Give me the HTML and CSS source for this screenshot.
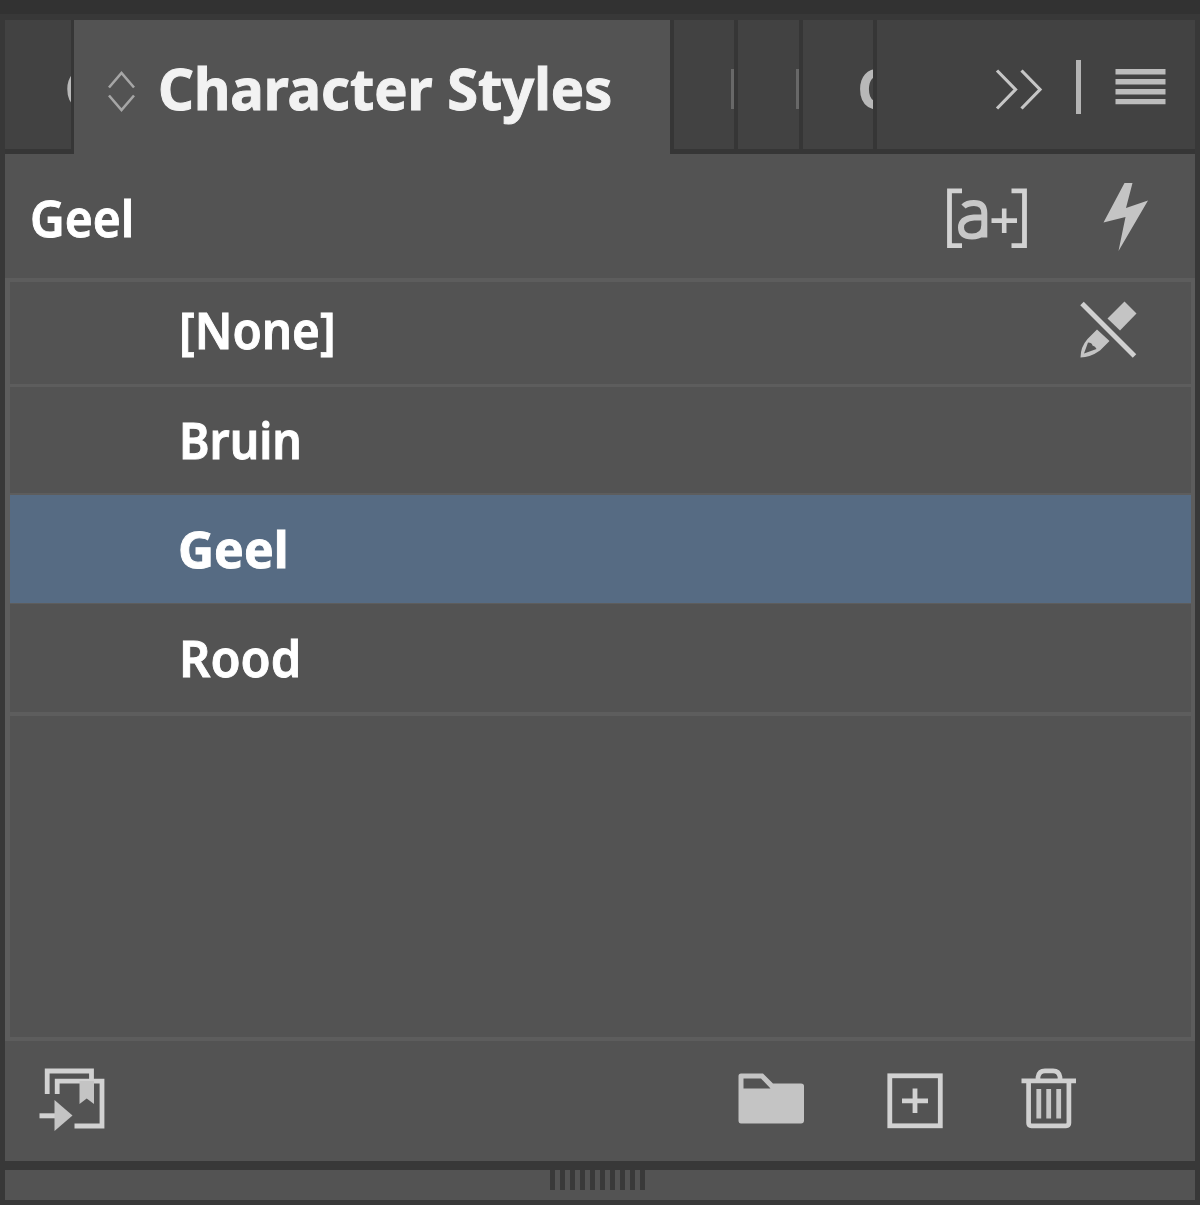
FILE: index.html
```html
<!DOCTYPE html>
<html lang="en">
<head>
<meta charset="utf-8">
<title>Character Styles</title>
<link rel="stylesheet" href="styles.css">
</head>
<body>
<main class="panel">
  <header class="tabs">
    <div class="tab tab-first"><span class="peek peek-sliver">C</span></div>
    <div class="tab-active">
      <svg class="sort" width="28" height="42" viewBox="0 0 28 42"><path d="M2 17.500L14.500 3L27 17.500M2 25.500L14.500 40L27 25.500" fill="none" stroke="#a6a6a6" stroke-width="2.600"/></svg>
      <h1 class="title">Character Styles</h1>
    </div>
    <div class="tab tab-narrow"><span class="stem"></span></div>
    <div class="tab tab-narrow"><span class="stem"></span></div>
    <div class="tab tab-c"><span class="peek peek-c">C</span></div>
    <div class="tools">
      <svg width="200" height="60" viewBox="980 60 200 60">
        <path d="M997 70.500L1015.500 89.500L997 108.500M1021.500 70.500L1040 89.500L1021.500 108.500" fill="none" stroke="#c6c6c6" stroke-width="3.200"/>
        <path d="M1078.500 60V114" stroke="#b4b4b4" stroke-width="5"/>
        <path d="M1115.500 71.800H1165.500M1115.500 81.700H1165.500M1115.500 91.700H1165.500M1115.500 101.600H1165.500" stroke="#bcbcbc" stroke-width="5.400"/>
      </svg>
    </div>
  </header>

  <section class="current">
    <span class="name name-current">Geel</span>
    <svg class="current-icons" width="220" height="80" viewBox="940 176 220 80">
      <path d="M962 190.800H949.500V245.700H962M1011.500 190.800H1024.500V245.700H1011.500" fill="none" stroke="#d2d2d2" stroke-width="4.800"/>
      <path d="M963.500 206.500Q967 203 974 203Q984.300 203 984.300 213V237.500M984.500 217.500H974Q961 218.500 961 227.500Q961 236.500 972 236.500Q984.300 236.500 984.300 225" fill="none" stroke="#c8c8c8" stroke-width="6"/>
      <path d="M991.500 220.600H1017M1004.200 208.500V233" stroke="#d2d2d2" stroke-width="4.600"/>
      <path d="M1124.500 183H1132.500L1126 208L1148 200.500L1118.500 251L1125.500 217L1103.500 222.500Z" fill="#c4c4c4"/>
    </svg>
  </section>

  <ul class="list">
    <li class="row row-none"><span class="name name-none">[None]</span>
      <svg class="locked" width="62" height="62" viewBox="1077 299 62 62">
        <path d="M1124.500 301.500L1136.500 313.500L1120 330.500L1107.500 318.500Z" fill="#c4c4c4"/>
        <path fill-rule="evenodd" d="M1097 329.500L1109.500 341L1100 350.500Q1090 357.500 1080.500 357.500Q1080.500 347 1087.500 339ZM1088 342.500L1084 353.500L1096.500 349Q1095.500 346 1092.500 345.500Q1092 342.500 1088 342.500Z" fill="#c4c4c4"/>
        <path d="M1082 303.500L1134.500 356" stroke="#d0d0d0" stroke-width="5"/>
      </svg>
    </li>
    <li class="row row-bruin"><span class="name name-bruin">Bruin</span></li>
    <li class="row row-selected"><span class="name name-selected">Geel</span></li>
    <li class="row row-last"><span class="name name-rood">Rood</span></li>
  </ul>

  <footer class="actions">
    <svg width="70" height="70" viewBox="36 1064 70 70">
      <path d="M47.200 1094V1071H91.500V1079M57.200 1094V1081.200H102V1126H74.500" fill="none" stroke="#d2d2d2" stroke-width="4.800"/>
      <path d="M79.500 1081H94V1104L86.700 1098.500L79.500 1104Z" fill="#c4c4c4"/>
      <path d="M39.500 1115.800H56" stroke="#d2d2d2" stroke-width="5"/>
      <path d="M54.500 1100L72.500 1115.500L54.500 1131Z" fill="#c4c4c4"/>
    </svg>
    <svg width="350" height="70" viewBox="732 1064 350 70">
      <path fill-rule="evenodd" d="M741 1073.500H763L773 1083.500H801Q804 1083.500 804 1086V1120.500Q804 1123.500 801 1123.500H741Q738.500 1123.500 738.500 1120.500V1076Q738.500 1073.500 741 1073.500ZM743.500 1078.500V1088.500H770.500L761 1078.500Z" fill="#c4c4c4"/>
      <rect x="889.800" y="1075.800" width="50.500" height="50" fill="none" stroke="#d2d2d2" stroke-width="4.800"/>
      <path d="M902 1100.800H928M915 1088.500V1113" stroke="#d2d2d2" stroke-width="4.800"/>
      <path d="M1021.500 1080.900H1076M1038 1080V1077Q1039 1070.800 1045 1070.800H1053Q1059 1070.800 1060 1077V1080M1028.600 1081V1123Q1028.600 1125.800 1031.500 1125.800H1066Q1068.900 1125.800 1068.900 1123V1081" fill="none" stroke="#d0d0d0" stroke-width="4.700"/>
      <path d="M1038.800 1089V1118.500M1048.700 1089V1118.500M1058.700 1089V1118.500" stroke="#c6c6c6" stroke-width="4.800"/>
    </svg>
  </footer>

  <div class="grip"><span class="grip-lines"></span></div>
</main>
</body>
</html>
```

FILE: styles.css
```css
* { box-sizing: border-box; }

body {
  margin: 0;
  background: #383838;
  font-family: "Noto Sans", "Open Sans", sans-serif;
  color: #fff;
}

svg { display: block; flex: none; }

.panel {
  height: 1205px;
  padding: 5px 5px 0;
  border-top: 14px solid #323232;
  display: flex;
  flex-direction: column;
  overflow: hidden;
}

.tabs {
  height: 135px;
  margin-top: 1px;
  display: flex;
  flex: none;
  background: #535353;
}

.tab,
.tools {
  height: 134px;
  background: #424242;
  border-bottom: 5px solid #363636;
  border-right: 4px solid #363636;
  display: flex;
  overflow: hidden;
}

.tab-first { width: 69px; border-right-width: 3px; }
.tab-active { width: 596px; height: 134px; display: flex; align-items: center; }
.tab-narrow { width: 65px; justify-content: flex-end; }
.tab-active + .tab { width: 68px; border-left: 4px solid #363636; }
.tab-c { width: 74px; }
.tools { flex: 1; border-right: 0; padding: 40px 0 0 103px; }

.stem { width: 3px; height: 40px; margin: 49px 0 0; background: #686868; }

.peek { font-size: 56px; line-height: 60px; color: #b8b8b8; }
.peek-c { font-weight: 700; margin: 37px 0 0 54px; }
.peek-sliver { font-weight: 500; margin: 37px 0 0 59px; }

.sort { margin: 7px 0 0 33px; }

.title {
  margin: 1px 0 0 23px;
  font-size: 57px;
  font-weight: 700;
  line-height: 80px;
  color: #f2f2f2;
  white-space: nowrap;
  transform: scaleX(0.981);
  transform-origin: left;
  -webkit-text-stroke: 1px #f2f2f2;
}

.current {
  height: 123px;
  flex: none;
  display: flex;
  justify-content: space-between;
  align-items: center;
  padding: 0 35px 1px 25px;
  background: #535353;
}

.name {
  font-size: 50.5px;
  font-weight: 600;
  line-height: 70px;
  transform-origin: left;
  -webkit-text-stroke: 0.9px #fff;
}

.name-current { transform: scaleX(0.947); padding-top: 4px; }
.name-none { transform: scaleX(0.942); }
.name-bruin { transform: scaleX(0.918); }
.name-selected { transform: scaleX(0.988); font-weight: 700; }
.name-rood { transform: scaleX(0.968); }

.list {
  height: 763px;
  flex: none;
  margin: 0;
  padding: 0;
  list-style: none;
  background: #535353;
  border: 4px solid #5d5d5d;
  border-left-width: 5px;
}

.row {
  height: 109px;
  padding: 0 0 2px 169px;
  border-bottom: 2px solid #5d5d5d;
  display: flex;
  align-items: center;
}

.row-none { height: 105px; justify-content: space-between; padding-right: 52px; padding-bottom: 6px; border-bottom-width: 3px; }
.row-bruin { height: 108px; padding-bottom: 0; }
.row-selected { background: #566b83; padding: 0 0 1px 168px; border-bottom-width: 1px; }
.row-last { height: 112px; padding-bottom: 0; border-bottom-width: 4px; }

.actions {
  height: 120px;
  flex: none;
  display: flex;
  justify-content: space-between;
  align-items: center;
  padding: 0 113px 4px 31px;
  background: #535353;
}

.grip {
  height: 30px;
  flex: none;
  margin-top: 9px;
  padding-left: 545px;
  background: #535353;
}

.grip-lines {
  display: block;
  width: 95px;
  height: 20px;
  background: repeating-linear-gradient(90deg, #393939 0 5px, #535353 5px 9.950px);
}
```
